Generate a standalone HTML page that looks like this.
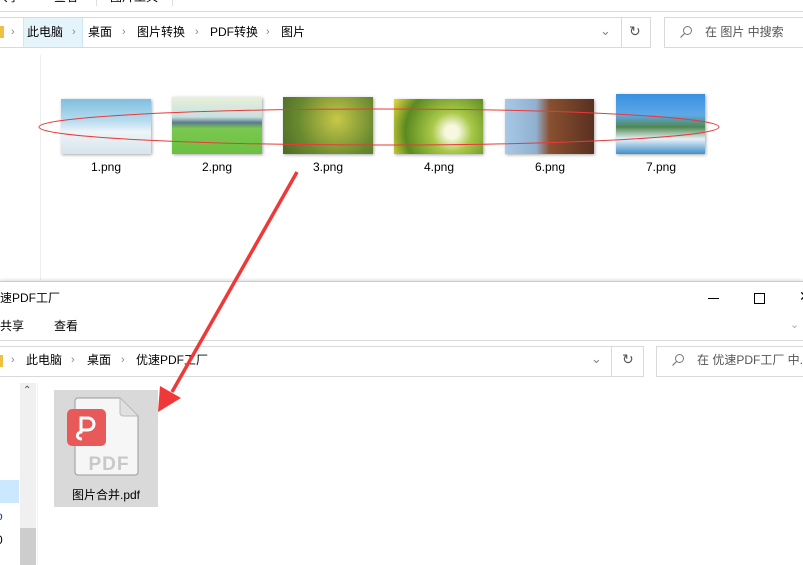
<!DOCTYPE html>
<html><head><meta charset="utf-8"><style>
*{margin:0;padding:0;box-sizing:border-box}
body{width:803px;height:565px;overflow:hidden;background:#fff;position:relative;font-family:"Liberation Sans","Noto Sans CJK SC",sans-serif;font-size:12px;color:#000}
.a{position:absolute}
.t{position:absolute;white-space:nowrap;font-size:12px;line-height:14px}
.hl{position:absolute;height:1px;background:#d9d9d9}
.box{position:absolute;border:1px solid #d9d9d9;background:#fff}
.chev{color:#888;font-size:11px}
.th{position:absolute;box-shadow:1px 1px 3px rgba(0,0,0,.35)}
.lb{position:absolute;font-size:12px;width:90px;text-align:center}
</style></head><body>
<!-- top window -->
<div class="t" style="left:-4px;top:-10px">共享</div>
<div class="t" style="left:54px;top:-10px">查看</div>
<div class="t" style="left:110px;top:-10px">图片工具</div>
<div class="a" style="left:96px;top:0;width:1px;height:6px;background:#ddd"></div>
<div class="a" style="left:172px;top:0;width:1px;height:6px;background:#ddd"></div>
<div class="hl" style="left:0;top:11px;width:803px"></div>
<div class="box" style="left:-1px;top:17px;width:623px;height:31px"></div>
<div class="box" style="left:621px;top:17px;width:30px;height:31px"></div>
<div class="a" style="left:23px;top:18px;width:60px;height:29px;background:#e5f3fb;border-left:1px solid #cde8f8;border-right:1px solid #cde8f8"></div>
<div class="a" style="left:0;top:26px;width:4px;height:12px;background:#f0c040"></div>
<div class="t chev" style="left:11px;top:25px">›</div>
<div class="t" style="left:27px;top:25px">此电脑</div>
<div class="t chev" style="left:72px;top:25px">›</div>
<div class="t" style="left:88px;top:25px">桌面</div>
<div class="t chev" style="left:122px;top:25px">›</div>
<div class="t" style="left:137px;top:25px">图片转换</div>
<div class="t chev" style="left:195px;top:25px">›</div>
<div class="t" style="left:210px;top:25px">PDF转换</div>
<div class="t chev" style="left:266px;top:25px">›</div>
<div class="t" style="left:281px;top:25px">图片</div>
<div class="t chev" style="left:600px;top:24px;font-size:13px">⌄</div>
<div class="t" style="left:629px;top:24px;color:#555;font-size:14px">↻</div>
<div class="box" style="left:664px;top:17px;width:145px;height:31px"></div>
<svg class="a" style="left:679px;top:25px" width="14" height="14"><circle cx="8.5" cy="5.5" r="4" fill="none" stroke="#777"/><line x1="5.5" y1="8.5" x2="1.5" y2="12.5" stroke="#777" stroke-width="1.2"/></svg>
<div class="t" style="left:705px;top:25px;color:#555">在 图片 中搜索</div>
<div class="a" style="left:40px;top:55px;width:1px;height:225px;background:#eee"></div>
<!-- thumbnails -->
<div class="th" style="left:61px;top:99px;width:90px;height:55px;background:linear-gradient(180deg,#7fbfe0 0%,#b8dcef 40%,#eef4f8 60%,#d6e4ec 100%)"></div>
<div class="th" style="left:172px;top:97px;width:90px;height:57px;background:linear-gradient(180deg,#e8f0d8 0%,#c8e0e0 35%,#5a7a8a 45%,#7ac850 55%,#6cc040 100%)"></div>
<div class="th" style="left:283px;top:97px;width:90px;height:57px;background:radial-gradient(circle at 60% 40%,#c8c848,#6a8a30 60%,#4a6a28)"></div>
<div class="th" style="left:394px;top:99px;width:89px;height:55px;background:radial-gradient(circle at 65% 60%,#f8f8e0 10%,#a8c848 30%,#5a8a20 70%,#e8d840)"></div>
<div class="th" style="left:505px;top:99px;width:89px;height:55px;background:linear-gradient(90deg,#a8c8e8 0%,#90b0d0 35%,#8a5030 50%,#5a3020 100%)"></div>
<div class="th" style="left:616px;top:94px;width:89px;height:60px;background:linear-gradient(180deg,#3890e0 0%,#60a8e8 35%,#508850 55%,#e8f0f8 75%,#4090c8 100%)"></div>
<div class="lb" style="left:61px;top:160px">1.png</div>
<div class="lb" style="left:172px;top:160px">2.png</div>
<div class="lb" style="left:283px;top:160px">3.png</div>
<div class="lb" style="left:394px;top:160px">4.png</div>
<div class="lb" style="left:505px;top:160px">6.png</div>
<div class="lb" style="left:616px;top:160px">7.png</div>
<!-- bottom window -->
<div class="a" style="left:0;top:281px;width:803px;height:284px;background:#fff;border-top:1px solid #ccc;box-shadow:0 -1px 3px rgba(0,0,0,.15)"></div>
<div class="t" style="left:0;top:291px">速PDF工厂</div>
<div class="a" style="left:708px;top:298px;width:11px;height:1px;background:#000"></div>
<div class="a" style="left:754px;top:293px;width:11px;height:11px;border:1px solid #000"></div>
<div class="t" style="left:799px;top:289px;font-size:14px">✕</div>
<div class="t" style="left:0;top:319px">共享</div>
<div class="t" style="left:54px;top:319px">查看</div>
<div class="t chev" style="left:790px;top:318px;color:#aaa">⌄</div>
<div class="hl" style="left:0;top:340px;width:803px"></div>
<div class="box" style="left:-1px;top:346px;width:613px;height:31px"></div>
<div class="box" style="left:611px;top:346px;width:33px;height:31px"></div>
<div class="a" style="left:0;top:355px;width:3px;height:12px;background:#f0c040"></div>
<div class="t chev" style="left:11px;top:353px">›</div>
<div class="t" style="left:26px;top:353px">此电脑</div>
<div class="t chev" style="left:71px;top:353px">›</div>
<div class="t" style="left:87px;top:353px">桌面</div>
<div class="t chev" style="left:121px;top:353px">›</div>
<div class="t" style="left:136px;top:353px">优速PDF工厂</div>
<div class="t chev" style="left:591px;top:352px;font-size:13px">⌄</div>
<div class="t" style="left:622px;top:352px;color:#555;font-size:14px">↻</div>
<div class="box" style="left:656px;top:346px;width:155px;height:31px"></div>
<svg class="a" style="left:671px;top:353px" width="14" height="14"><circle cx="8.5" cy="5.5" r="4" fill="none" stroke="#777"/><line x1="5.5" y1="8.5" x2="1.5" y2="12.5" stroke="#777" stroke-width="1.2"/></svg>
<div class="t" style="left:697px;top:353px;color:#555">在 优速PDF工厂 中...</div>
<!-- nav/scroll -->
<div class="a" style="left:0;top:480px;width:19px;height:23px;background:#cce8ff"></div>
<div class="t" style="left:-4px;top:509px;color:#1a3a9a">o</div>
<div class="t" style="left:-4px;top:533px">0</div>
<div class="a" style="left:20px;top:383px;width:16px;height:182px;background:#f0f0f0"></div>
<div class="t" style="left:23px;top:384px;font-size:10px;color:#555">⌃</div>
<div class="a" style="left:20px;top:528px;width:16px;height:37px;background:#cdcdcd"></div>
<div class="a" style="left:37px;top:383px;width:1px;height:182px;background:#f3f3f3"></div>
<!-- file tile -->
<div class="a" style="left:54px;top:390px;width:104px;height:117px;background:#d9d9d9"></div>
<svg class="a" style="left:60px;top:394px" width="90" height="100" viewBox="0 0 90 100">
<path d="M18 4 H60 L78 22 V78 A3 3 0 0 1 75 81 H18 A3 3 0 0 1 15 78 V7 A3 3 0 0 1 18 4Z" fill="#f6f6f6" stroke="#9a9a9a" stroke-width="1"/>
<path d="M60 4 V19 A3 3 0 0 0 63 22 H78" fill="#e0e0e0" stroke="#bbb"/>
<rect x="7" y="15" width="39" height="37" rx="5" fill="#e85a5a"/>
<path d="M22 45 C16 45 16 39 21 38 L21 24 H28 A6 6 0 0 1 28 36 H21" fill="none" stroke="#fff" stroke-width="3"/>
<text x="49" y="76" font-family="Liberation Sans,sans-serif" font-size="19" fill="#c8c8c8" text-anchor="middle" font-weight="bold" letter-spacing="1">PDF</text>
</svg>
<div class="t" style="left:54px;top:488px;width:104px;text-align:center">图片合并.pdf</div>
<!-- annotations -->
<svg class="a" style="left:0;top:0" width="803" height="565">
<ellipse cx="379" cy="127" rx="340" ry="18" fill="none" stroke="#e83a3a" stroke-width="1"/>
<line x1="297" y1="172" x2="172" y2="392" stroke="#f03838" stroke-width="3.5"/>
<polygon points="158,412 160,386 181,398" fill="#f03838"/>
</svg>
</body></html>
